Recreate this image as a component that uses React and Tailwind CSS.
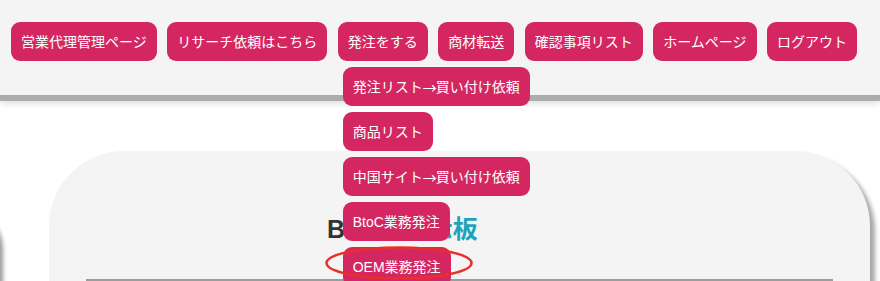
import React from "react";

const navItems = [
  "営業代理管理ページ",
  "リサーチ依頼はこちら",
  "発注をする",
  "商材転送",
  "確認事項リスト",
  "ホームページ",
  "ログアウト",
];

const dropItems = [
  ["発注リスト", "買い付け依頼"],
  ["商品リスト"],
  ["中国サイト", "買い付け依頼"],
  ["BtoC業務発注"],
  ["OEM業務発注"],
];

const btn =
  "h-[39px] px-[10px] rounded-[9px] bg-[#d42761] text-white text-[14px] flex items-center whitespace-nowrap leading-none";

export default function App() {
  return (
    <div
      className="relative w-[880px] h-[281px] overflow-hidden bg-white"
      style={{ fontFamily: '"Liberation Sans", "Noto Sans CJK JP", sans-serif' }}
    >
      {/* left stray panel shadow */}
      <div className="absolute left-[-300px] top-[205px] w-[300px] h-[200px] rounded-tr-[40px] bg-white shadow-[3px_4px_4px_#9a9a9a]" />

      <header className="relative z-10 h-[95px] bg-[#f4f4f4] shadow-[0_6px_0_#acacac,0_9px_6px_rgba(0,0,0,0.12)]">
        <nav className="flex gap-[10.5px] pt-[22px] pl-[11px]">
          {navItems.map((t, i) =>
            i === 2 ? (
              <div key={t} className="relative">
                <div className={btn}>{t}</div>
                <div className="absolute left-[5px] top-[45px] flex flex-col items-start gap-[6px] z-20">
                  {dropItems.map((d) => (
                    <div key={d.join("")} className={btn}>
                      {d[0]}
                      {d.length > 1 && (
                        <>
                          <span className="font-['Noto_Sans_CJK_JP'] tracking-[-1px]">→</span>
                          {d[1]}
                        </>
                      )}
                    </div>
                  ))}
                </div>
              </div>
            ) : (
              <div key={t} className={btn}>
                {t}
              </div>
            )
          )}
        </nav>
      </header>

      <main className="mt-[56px] ml-[49px] w-[821px] h-[300px] rounded-[75px] bg-[#f4f4f4] shadow-[5px_5px_4px_#a8a8a8]">
        <div className="pt-[66px] pl-[278px] flex items-baseline text-[25px] font-bold leading-none">
          <span className="text-[#333333]">BtoC</span>
          <span className="ml-[16px] text-[#1fa3b9]">掲示板</span>
        </div>
        <div className="mt-[37px] mx-[37px] h-[40px] border-t-[3px] border-[#9c9c9c] bg-[#fbfbe8]" />
      </main>

      <svg
        className="absolute left-[324px] top-[245px] z-30"
        width="150"
        height="38"
        viewBox="0 0 150 38"
      >
        <ellipse cx="75" cy="18" rx="72.5" ry="15.5" fill="none" stroke="#ea2f2b" strokeWidth="2.5" />
      </svg>
    </div>
  );
}
